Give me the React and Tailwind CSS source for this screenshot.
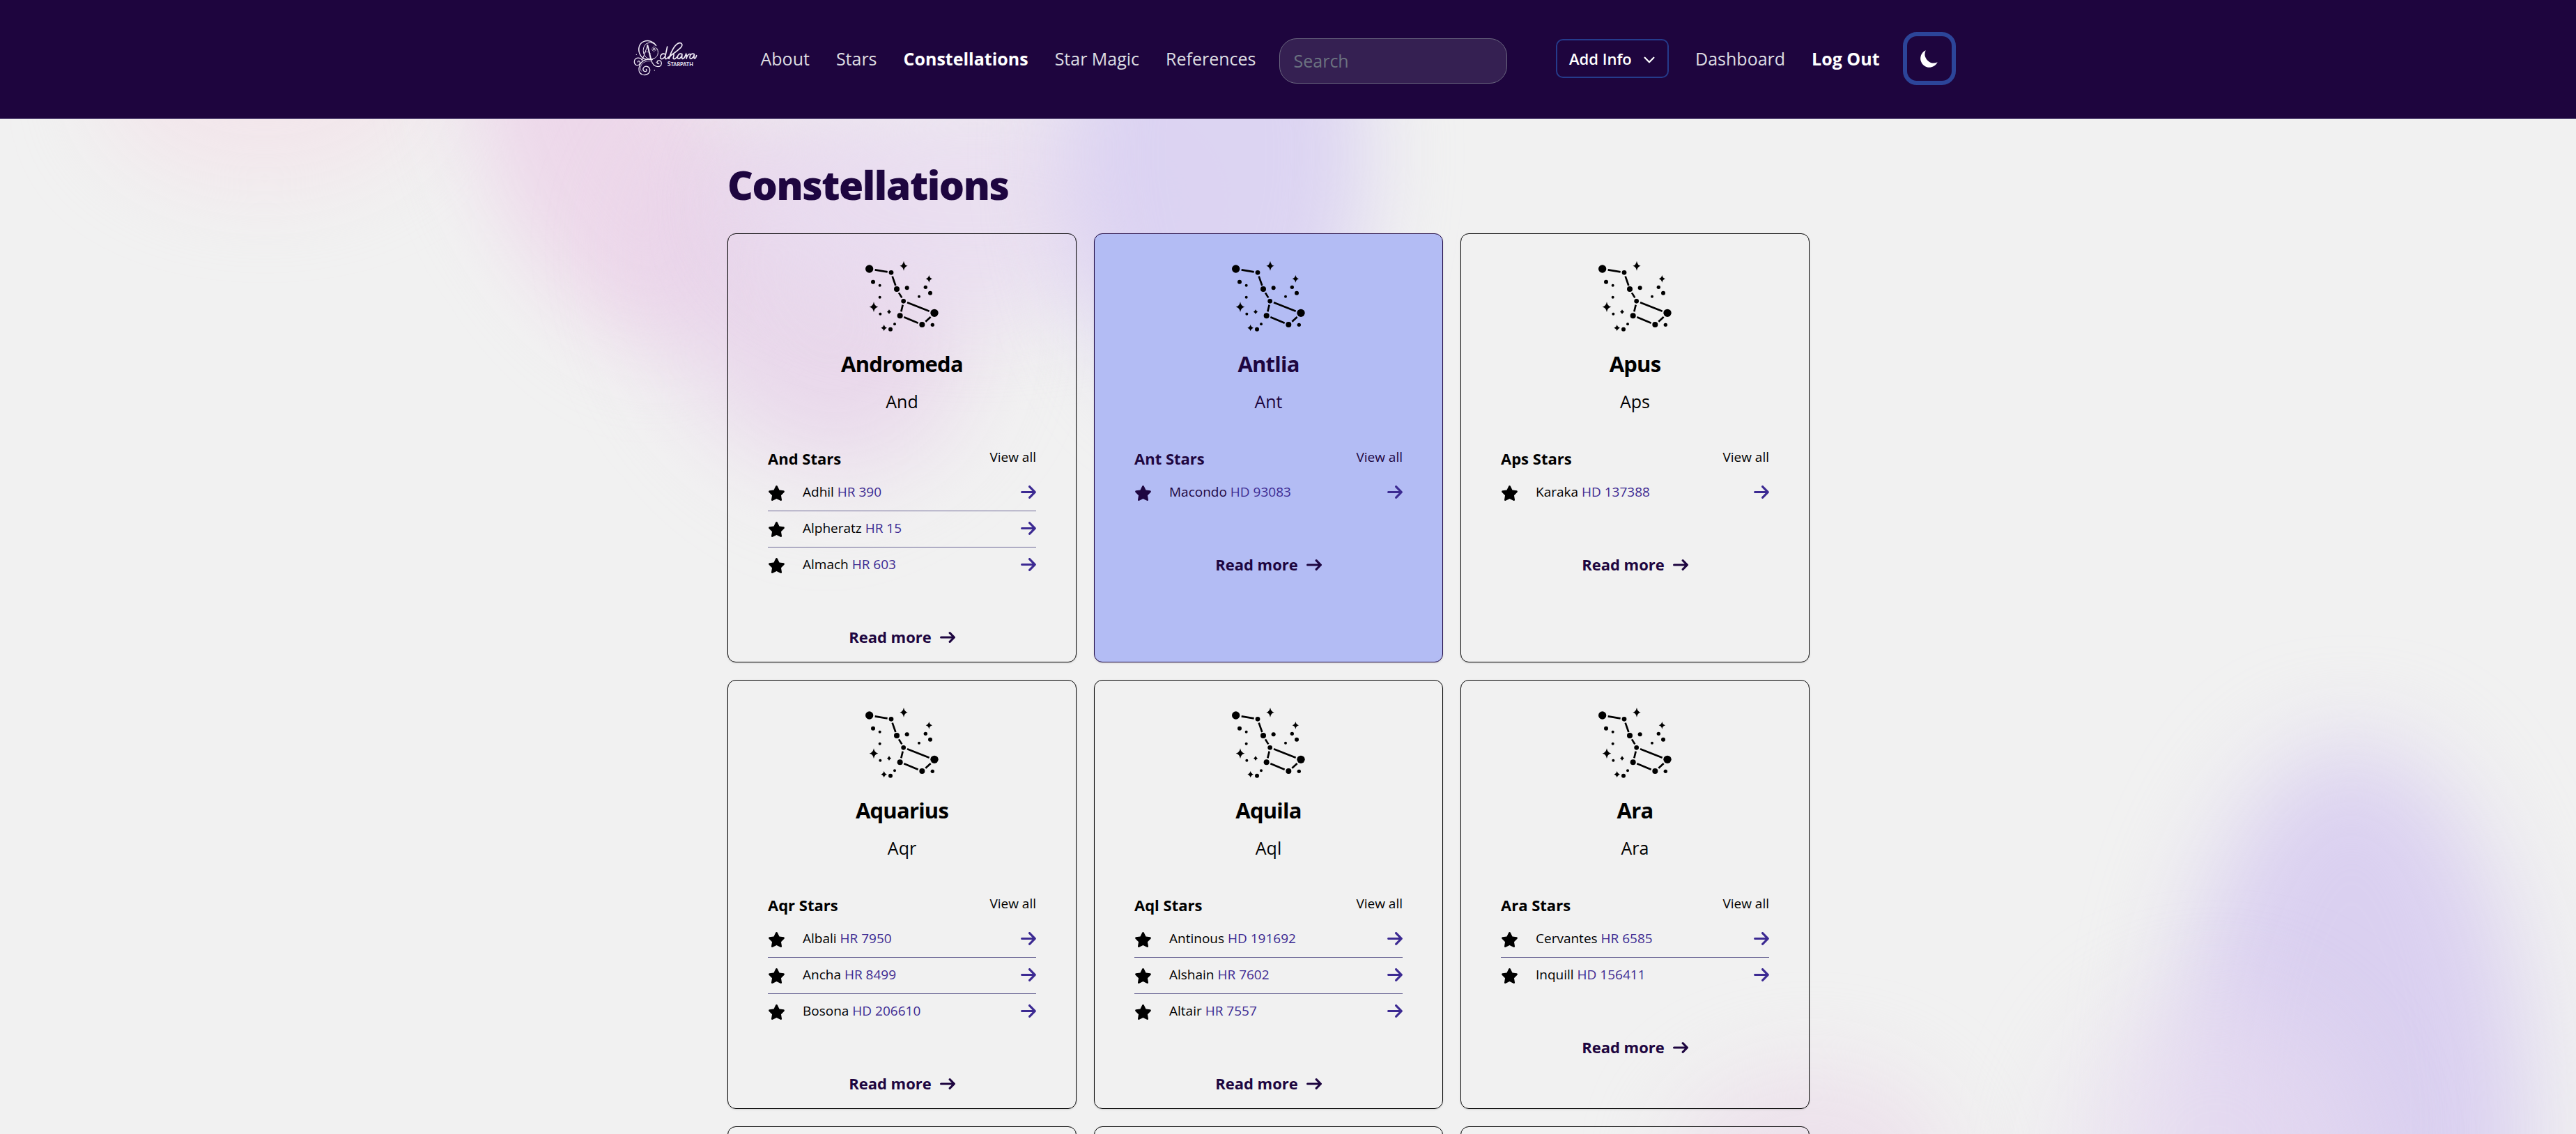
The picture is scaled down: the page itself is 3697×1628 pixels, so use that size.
import React from "react";
import { FaArrowRight, FaStar } from "react-icons/fa6";

const CONSTELLATIONS = [
  { name: "Andromeda", abbr: "And", stars: [["Adhil", "HR 390"], ["Alpheratz", "HR 15"], ["Almach", "HR 603"]] },
  { name: "Antlia", abbr: "Ant", active: true, stars: [["Macondo", "HD 93083"]] },
  { name: "Apus", abbr: "Aps", stars: [["Karaka", "HD 137388"]] },
  { name: "Aquarius", abbr: "Aqr", stars: [["Albali", "HR 7950"], ["Ancha", "HR 8499"], ["Bosona", "HD 206610"]] },
  { name: "Aquila", abbr: "Aql", stars: [["Antinous", "HD 191692"], ["Alshain", "HR 7602"], ["Altair", "HR 7557"]] },
  { name: "Ara", abbr: "Ara", stars: [["Cervantes", "HR 6585"], ["Inquill", "HD 156411"]] },
];

const NAV = ["About", "Stars", "Constellations", "Star Magic", "References"];

// Each dot is [cx, cy, r].
const DOTS = [
  [83, 78, 17], [177, 94, 10], [201, 165, 12], [230, 217, 10], [215, 280, 12], [310, 318, 12], [363, 268, 17],
  [99, 134, 9], [128, 149, 6], [128, 200, 6], [130, 272, 6], [192, 316, 6], [174, 338, 9], [245, 160, 9],
  [297, 197, 6], [325, 157, 8], [345, 182, 9], [355, 319, 8],
];

// Each sparkle is [cx, cy, rx, ry].
const SPARKLES = [
  [231, 65, 17, 21], [340, 121, 14, 16], [102, 242, 19, 22], [168, 263, 9, 10], [146, 332, 13, 14],
];

function ConstellationArt() {
  return (
    <svg viewBox="0 0 450 390" className="w-[150px] h-[130px]" fill="#000" aria-hidden="true">
      {DOTS.map(([cx, cy, r]) => (
        <circle key={`${cx}-${cy}`} cx={cx} cy={cy} r={r} />
      ))}
      {SPARKLES.map(([x, y, a, b]) => (
        <path
          key={`${x}-${y}`}
          d={`M${x} ${y - b}Q${x + 3} ${y - 3} ${x + a} ${y}Q${x + 3} ${y + 3} ${x} ${y + b}Q${x - 3} ${y + 3} ${x - a} ${y}Q${x - 3} ${y - 3} ${x} ${y - b}Z`}
        />
      ))}
      <path
        d="M107 82L161 91M182 110L196 150M210 181L223 202M227 233L220 262M246 223L341 260M232 286L293 311M325 305L347 285"
        fill="none"
        stroke="#000"
        strokeWidth="8"
      />
    </svg>
  );
}

function Logo() {
  return (
    <svg viewBox="0 0 390 270" className="w-[130px] h-[90px] shrink-0" fill="none" stroke="#efeaf5" strokeLinecap="round" role="img" aria-label="Adhara Starpath">
      <path strokeWidth="4" d="M158 80C148 62 125 54 106 61C84 69 78 95 88 116C94 129 103 136 112 138" />
      <path strokeWidth="3" d="M154 74C138 62 116 66 108 80C98 97 103 120 116 131C132 143 154 138 163 122C168 112 167 98 160 90" />
      <path strokeWidth="2" d="M92 70C82 84 80 106 92 124C104 140 132 144 148 136" />
      <path strokeWidth="3" d="M98 142C106 122 114 100 121 78" />
      <path strokeWidth="6" d="M121 78L136 140" />
      <path strokeWidth="4" d="M136 140C141 158 152 170 166 170C178 170 184 160 180 150C176 141 163 142 162 151C162 157 168 159 170 156" />
      <path strokeWidth="2" d="M104 112C112 104 126 104 134 114" />
      <path strokeWidth="4" d="M98 142C94 134 80 128 70 136C61 143 62 158 72 163C82 167 92 158 88 149C86 144 79 145 79 150" />
      <path strokeWidth="4" d="M142 140C122 134 96 142 88 162C80 182 84 198 98 204C114 210 132 200 131 184C130 170 114 164 105 173C98 181 103 192 112 191C118 190 119 183 115 181" />
      <path strokeWidth="2" d="M134 146C116 144 98 152 93 166C88 176 90 186 95 190" />
      <path strokeWidth="2" d="M149 81V107M137 94H161M142 87L156 101M156 87L142 101" />
      <path strokeWidth="5" d="M196 116C184 110 174 122 176 132C179 142 193 136 198 122L206 84M198 122C195 136 198 140 206 134C220 122 248 104 264 88C274 78 270 66 258 68C240 72 226 96 212 138C218 122 230 112 234 118C236 124 226 138 236 137C242 136 246 130 250 126" />
      <path strokeWidth="5" d="M270 116C258 110 249 122 250 132C254 141 266 134 270 118C267 132 269 139 276 135C282 130 284 122 287 115C292 124 288 134 288 137C290 124 298 113 306 117" />
      <path strokeWidth="5" d="M322 116C310 110 301 122 303 132C306 141 318 134 323 117C319 131 321 140 328 132L332 122" />
      <circle cx="73" cy="118" r="2" fill="#efeaf5" stroke="none" />
      <circle cx="151" cy="186" r="2" fill="#efeaf5" stroke="none" />
      <circle cx="159" cy="152" r="2" fill="#efeaf5" stroke="none" />
      <text x="206" y="168" fontSize="22" fontWeight="700" fill="#efeaf5" stroke="none" fontFamily="Lato, sans-serif">
        <tspan fontSize="26">S</tspan>TARPATH
      </text>
    </svg>
  );
}

function Header() {
  return (
    <header className="bg-[#1e053e] border-b border-[#6c6288] pb-0.5">
      <div className="mx-auto flex h-[168px] max-w-[1920px] items-center justify-between pr-0.5">
        <div className="flex items-center">
          <a href="#home">
            <Logo />
          </a>
          <nav className="ml-[73px] flex gap-[38px] text-[25px] leading-[36px]">
            {NAV.map((label) => (
              <a
                key={label}
                href={`#${label.toLowerCase().replace(" ", "-")}`}
                className={label === "Constellations" ? "font-bold text-white" : "text-[#dddde2]"}
              >
                {label}
              </a>
            ))}
          </nav>
          <form className="ml-[33px] pt-1.5">
            <input
              type="search"
              aria-label="Search"
              placeholder="Search"
              className="block h-[65px] w-[327px] rounded-[25px] border border-[#6b6880] bg-[#352052] px-5 text-[25px] text-white placeholder:text-[#6b7280]"
            />
          </form>
        </div>
        <div className="flex items-center text-[25px] leading-[36px]">
          <button type="button" className="flex h-[56px] w-[162px] items-center justify-between rounded-[10px] border-2 border-[#253b8b] pr-4 pl-[17px] text-[22px] font-semibold text-white">
            Add Info
            <svg viewBox="0 0 10 6" className="mt-[3px] mr-0.5 h-[10px] w-[16px]" fill="none" stroke="currentColor" strokeWidth="1.4" strokeLinecap="round" strokeLinejoin="round" aria-hidden="true">
              <path d="m1 1 4 4 4-4" />
            </svg>
          </button>
          <a href="#dashboard" className="ml-[38px] text-[#dddde2]">Dashboard</a>
          <a href="#logout" className="ml-[38px] font-bold text-white">Log Out</a>
          <button type="button" aria-label="Toggle dark mode" className="ml-[33px] flex size-[76px] items-center justify-center rounded-[20px] border-6 border-[#2c4599] text-white">
            <svg viewBox="0 0 20 20" className="size-[32px]" fill="currentColor" aria-hidden="true">
              <path d="M17.293 13.293A8 8 0 016.707 2.707a8.001 8.001 0 1010.586 10.586z" />
            </svg>
          </button>
        </div>
      </div>
    </header>
  );
}

function Card({ name, abbr, stars, active }) {
  return (
    <article
      className={
        "flex flex-col items-center rounded-[12px] border px-[57px] pt-6 pb-5 shadow-sm " +
        (active ? "border-[#1e0640] bg-[#b3bcf4] text-[#1e0640]" : "border-black text-black")
      }
    >
      <ConstellationArt />
      <h2 className="mt-[12px] text-[31px] leading-[40px] font-bold tracking-tight">{name}</h2>
      <p className="mt-[16px] text-[25px] leading-[36px]">{abbr}</p>
      <div className="mt-[48px] flex w-full items-start justify-between">
        <h3 className="text-[22px] leading-[32px] font-bold">{abbr} Stars</h3>
        <a href={`#${abbr}-stars`} className="text-[19px] leading-[28px]">View all</a>
      </div>
      <ul className="mt-2 w-full">
        {stars.map(([star, code]) => (
          <li key={star} className="border-b border-[#6c6896] pt-[10px] pb-[13px] last:border-b-0">
            <a href={`#${star}`} className="flex items-center text-[19px] leading-[28px]">
              <FaStar className="mt-1 h-[22px] w-[25px]" aria-hidden="true" />
              <span className="ml-[25px] flex-1">
                {star} <span className="text-[#3c2a92]">{code}</span>
              </span>
              <FaArrowRight className="h-[25px] w-[22px] text-[#3c2a92]" aria-hidden="true" />
            </a>
          </li>
        ))}
      </ul>
      <a href={`#${name}`} className="mt-[61px] flex items-center gap-3 text-[22px] leading-[32px] font-bold text-[#1e0640]">
        Read more
        <svg viewBox="0 0 14 10" className="mt-0.5 h-[16px] w-[22px]" fill="none" stroke="currentColor" strokeWidth="2" strokeLinecap="round" strokeLinejoin="round" aria-hidden="true">
          <path d="M1 5h12m0 0L9 1m4 4L9 9" />
        </svg>
      </a>
    </article>
  );
}

function EmptyCard() {
  return <div className="min-h-40 rounded-[12px] border border-black shadow-sm" aria-hidden="true" />;
}

function Backdrop() {
  return (
    <div className="pointer-events-none absolute inset-0 overflow-hidden" aria-hidden="true">
      <div className="absolute -top-[200px] left-[140px] h-[300px] w-[480px] rounded-[50%] bg-[#f4e0e8]/60 blur-[60px]" />
      <div className="absolute -top-[260px] left-[700px] h-[600px] w-[340px] -rotate-25 rounded-[50%] bg-[#ecd2e8]/80 blur-[60px]" />
      <div className="absolute -top-[20px] left-[950px] h-[540px] w-[420px] -rotate-30 rounded-[50%] bg-[#e7d2ea]/80 blur-[70px]" />
      <div className="absolute -top-[40px] left-[1060px] h-[320px] w-[680px] rounded-[50%] bg-[#e8dcf0]/80 blur-[60px]" />
      <div className="absolute -top-[320px] left-[1530px] h-[740px] w-[430px] rounded-[50%] bg-[#d9d0f2]/90 blur-[60px]" />
      <div className="absolute top-[900px] left-[3120px] h-[1100px] w-[510px] rounded-[50%] bg-[#dad0f0] blur-[70px]" />
      <div className="absolute top-[1260px] left-[2960px] h-[500px] w-[440px] rounded-[50%] bg-[#e8dcf0]/60 blur-[70px]" />
      <div className="absolute top-[1360px] left-[2400px] h-[300px] w-[400px] rounded-[50%] bg-[#ebdcea]/70 blur-[60px]" />
    </div>
  );
}

export default function App() {
  return (
    <div className="flex h-screen flex-col overflow-hidden bg-[#f1f1f1] font-['Open_Sans',sans-serif]">
      <Header />
      <div className="relative flex-1">
        <Backdrop />
        <main className="relative mx-auto max-w-[1609px] pt-[63px] pr-14">
          <h1 className="text-[57px] leading-[62px] font-extrabold tracking-tight text-[#1e0640]">Constellations</h1>
          <section className="mt-[39px] grid grid-cols-3 gap-[25px]">
            {CONSTELLATIONS.map((item) => (
              <Card key={item.name} {...item} />
            ))}
            <EmptyCard />
            <EmptyCard />
            <EmptyCard />
          </section>
        </main>
      </div>
    </div>
  );
}
